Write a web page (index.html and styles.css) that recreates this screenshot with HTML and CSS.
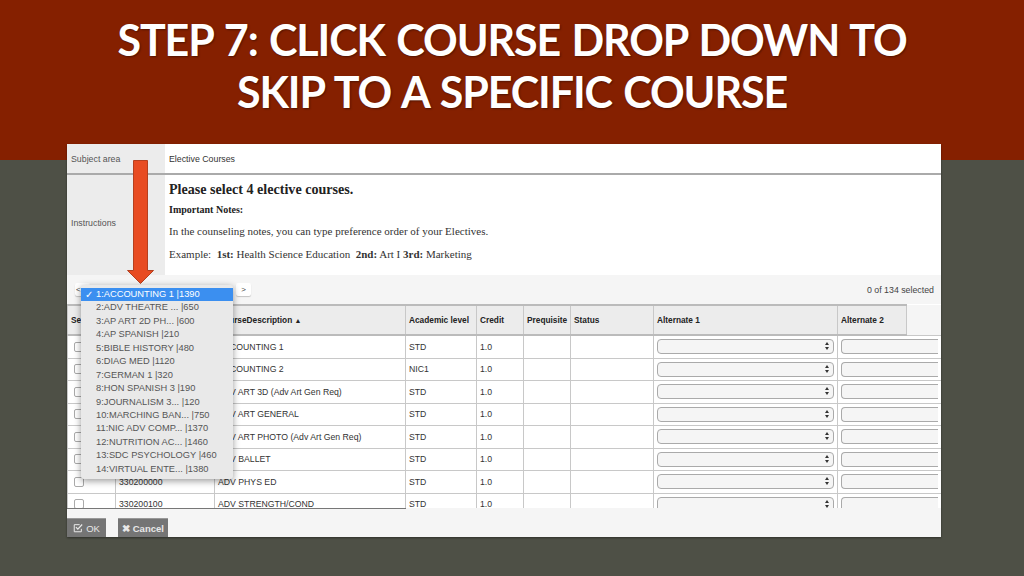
FILE: index.html
```html
<!DOCTYPE html>
<html lang="en">
<head>
    <meta charset="UTF-8">
    <meta name="viewport" content="width=device-width, initial-scale=1.0">
    <title>Step 7</title>
    <link rel="stylesheet" href="styles.css">
</head>
<body>
    <div class="banner">
        <h1>STEP 7: CLICK COURSE DROP DOWN TO<br>SKIP TO A SPECIFIC COURSE</h1>
    </div>

    <div class="window">
        <div class="info-row subject">
            <div class="info-label">Subject area</div>
            <div class="info-value">Elective Courses</div>
        </div>
        <div class="info-row instructions">
            <div class="info-label">Instructions</div>
            <div class="info-value notes">
                <p class="lead">Please select 4 elective courses.</p>
                <p class="small"><b>Important Notes:</b></p>
                <p>In the counseling notes, you can type preference order of your Electives.</p>
                <p>Example:&nbsp; <b>1st:</b> Health Science Education&nbsp; <b>2nd:</b> Art I <b>3rd:</b> Marketing</p>
            </div>
        </div>

        <div class="toolbar">
            <span class="page-btn prev">&lt;</span>
            <span class="page-btn next">&gt;</span>
            <span class="count">0 of 134 selected</span>
        </div>

        <div class="table-wrap">
            <table class="courses">
                <colgroup>
                    <col class="c-sel"><col class="c-code"><col class="c-desc"><col class="c-level"><col class="c-credit"><col class="c-pre"><col class="c-status"><col class="c-alt1"><col class="c-alt2"><col class="c-rest">
                </colgroup>
                <thead>
                    <tr>
                        <th>Select</th><th></th><th>CourseDescription <span class="sort">&#9650;</span></th><th>Academic level</th><th>Credit</th><th>Prequisite</th><th>Status</th><th>Alternate 1</th><th>Alternate 2</th><th class="blank"></th>
                    </tr>
                </thead>
                <tbody>
                    <tr><td><span class="check"></span></td><td></td><td>ACCOUNTING 1</td><td>STD</td><td>1.0</td><td></td><td></td><td><div class="pick"><span class="updown"></span></div></td><td colspan="2"><div class="pick open"></div></td></tr>
                    <tr><td><span class="check"></span></td><td></td><td>ACCOUNTING 2</td><td>NIC1</td><td>1.0</td><td></td><td></td><td><div class="pick"><span class="updown"></span></div></td><td colspan="2"><div class="pick open"></div></td></tr>
                    <tr><td><span class="check"></span></td><td></td><td>ADV ART 3D (Adv Art Gen Req)</td><td>STD</td><td>1.0</td><td></td><td></td><td><div class="pick"><span class="updown"></span></div></td><td colspan="2"><div class="pick open"></div></td></tr>
                    <tr><td><span class="check"></span></td><td></td><td>ADV ART GENERAL</td><td>STD</td><td>1.0</td><td></td><td></td><td><div class="pick"><span class="updown"></span></div></td><td colspan="2"><div class="pick open"></div></td></tr>
                    <tr><td><span class="check"></span></td><td></td><td>ADV ART PHOTO (Adv Art Gen Req)</td><td>STD</td><td>1.0</td><td></td><td></td><td><div class="pick"><span class="updown"></span></div></td><td colspan="2"><div class="pick open"></div></td></tr>
                    <tr><td><span class="check"></span></td><td></td><td>ADV BALLET</td><td>STD</td><td>1.0</td><td></td><td></td><td><div class="pick"><span class="updown"></span></div></td><td colspan="2"><div class="pick open"></div></td></tr>
                    <tr><td><span class="check"></span></td><td>330200000</td><td>ADV PHYS ED</td><td>STD</td><td>1.0</td><td></td><td></td><td><div class="pick"><span class="updown"></span></div></td><td colspan="2"><div class="pick open"></div></td></tr>
                    <tr><td><span class="check"></span></td><td>330200100</td><td>ADV STRENGTH/COND</td><td>STD</td><td>1.0</td><td></td><td></td><td><div class="pick"><span class="updown"></span></div></td><td colspan="2"><div class="pick open"></div></td></tr>
                </tbody>
            </table>
        </div>

        <div class="footer">
            <span class="btn ok">
                <svg viewBox="0 0 12 12" width="10" height="10"><path d="M10 7v3.5H1.5V2H8" fill="none" stroke="currentColor" stroke-width="1.2"/><path d="M3.5 5l2.3 2.3L11 1.8" fill="none" stroke="currentColor" stroke-width="1.5"/></svg>
                OK
            </span>
            <span class="btn cancel">&#10006; Cancel</span>
        </div>

        <!-- arrow and open menu sit over the form -->
        <svg class="arrow" viewBox="0 0 28 125" width="28" height="125">
            <path d="M7.5 .5h14v110h6l-13 13-13-13h6z" fill="#e84c22" stroke="#b5401f"/>
        </svg>
        <ul class="menu">
            <li class="picked">1:ACCOUNTING 1 |1390</li>
            <li>2:ADV THEATRE ... |650</li>
            <li>3:AP ART 2D PH... |600</li>
            <li>4:AP SPANISH |210</li>
            <li>5:BIBLE HISTORY |480</li>
            <li>6:DIAG MED |1120</li>
            <li>7:GERMAN 1 |320</li>
            <li>8:HON SPANISH 3 |190</li>
            <li>9:JOURNALISM 3... |120</li>
            <li>10:MARCHING BAN... |750</li>
            <li>11:NIC ADV COMP... |1370</li>
            <li>12:NUTRITION AC... |1460</li>
            <li>13:SDC PSYCHOLOGY |460</li>
            <li>14:VIRTUAL ENTE... |1380</li>
        </ul>
    </div>
</body>
</html>
```

FILE: styles.css
```css
body { margin: 0; width: 1024px; height: 576px; overflow: hidden; background: #4e5046; font-family: 'Liberation Sans', Arial, sans-serif; color: #333; }

.banner { height: 160px; background: #852000; text-align: center; box-sizing: border-box; padding-top: 14px; }
h1 { margin: 0; font-family: 'Lato', sans-serif; font-size: 43px; letter-spacing: -1.1px; word-spacing: 2px; line-height: 52px; font-weight: 700; color: #fff; text-shadow: 1px 1px 2px rgba(0,0,0,0.4); }

.window { position: relative; width: 874px; height: 393px; margin: -16px 0 0 67px; background: #f5f5f5; display: flex; flex-direction: column; font-size: 8.8px; box-shadow: 0 1px 2px rgba(0,0,0,0.4); }

.info-row { display: flex; border-bottom: 2px solid #aaa; background: #fff; }
.subject { height: 29px; }
.instructions { height: 100px; border-bottom: none; }
.info-label { width: 98px; flex-shrink: 0; background: #ececec; color: #555; display: flex; align-items: center; padding-left: 4px; box-sizing: border-box; }
.instructions .info-label { padding-bottom: 4px; }
.info-value { padding-left: 4px; color: #333; display: flex; align-items: center; }

.notes { display: block; font-family: 'Liberation Serif', serif; font-size: 11px; color: #333; padding-top: 6px; }
.notes p { margin: 0 0 11px; line-height: 12px; }
.notes .lead { font-size: 14.1px; font-weight: bold; color: #222; margin-bottom: 7px; line-height: 16px; }
.notes .small { font-size: 10px; color: #222; margin-bottom: 9px; margin-top: 1px; }

.toolbar { height: 29px; flex-shrink: 0; display: flex; align-items: center; padding-left: 8px; padding-right: 7px; box-sizing: border-box; }
.page-btn { width: 15px; height: 13px; background: #fff; border-radius: 2px; font-size: 8px; color: #444; display: flex; align-items: center; justify-content: center; box-shadow: 0 1px 1px rgba(0,0,0,0.2); }
.prev { margin-right: 146px; justify-content: flex-start; padding-left: 1px; box-sizing: border-box; }
.count { margin-left: auto; color: #444; }

.table-wrap { height: 204px; overflow: hidden; flex-shrink: 0; background: #fff; }
.courses { width: 874px; table-layout: fixed; border-collapse: collapse; }
.c-sel { width: 48px; } .c-code { width: 99px; } .c-desc { width: 191px; } .c-level { width: 71px; } .c-credit { width: 47px; }
.c-pre { width: 47px; } .c-status { width: 83px; } .c-alt1 { width: 184px; } .c-alt2 { width: 69px; } .c-rest { width: 35px; }

.courses th { height: 28px; padding: 0 3px; background: #ececec; border: 1px solid #c8c8c8; border-top: 2px solid #bbb; border-bottom: 2px solid #bbb; text-align: left; font-size: 8.3px; color: #222; white-space: nowrap; }
.courses th.blank { background: #f5f5f5; border: none; }
.sort { font-size: 7px; }
.courses td { height: 21.5px; padding: 0 3px; border: 1px solid #c8c8c8; font-size: 8.7px; color: #333; white-space: nowrap; overflow: hidden; }

.check { display: block; width: 8px; height: 8px; margin-left: 3px; background: #fff; border: 1px solid #aaa; border-radius: 2px; }
.pick { position: relative; height: 13px; background: #f5f5f5; border: 1px solid #aaa; border-radius: 4px; }
.pick.open { border-right: none; border-radius: 4px 0 0 4px; }
.updown { position: absolute; right: 4px; top: 2px; width: 0; height: 0; border-left: 2px solid transparent; border-right: 2px solid transparent; border-bottom: 3px solid #333; }
.updown::after { content: ""; position: absolute; left: -2px; top: 5px; width: 0; height: 0; border-left: 2px solid transparent; border-right: 2px solid transparent; border-top: 3px solid #333; }

.footer { flex: 1; display: flex; align-items: flex-end; gap: 12px; background: linear-gradient(#777, #777) no-repeat 0 0 / 339px 1px; }
.btn { height: 19px; display: flex; align-items: center; justify-content: center; gap: 3px; font-size: 9.5px; box-sizing: border-box; background: #757575; color: #e8e8e8; border-top: 1px solid #999; }
.ok { width: 39px; }
.cancel { width: 50px; font-weight: bold; }

.arrow { position: absolute; left: 59px; top: 16px; }

.menu { position: absolute; left: 14px; top: 141px; width: 152px; margin: 0; padding: 3px 0 3px; list-style: none; background: #e9e9e9; border-radius: 3px; box-shadow: 0 2px 7px rgba(0,0,0,0.4); font-size: 9.3px; color: #555; }
.menu li { height: 13.45px; line-height: 13.45px; padding-left: 15px; white-space: nowrap; }
.menu .picked { background: #3b8ff0; color: #fff; position: relative; }
.menu .picked::before { content: "\2713"; position: absolute; left: 4px; font-family: 'DejaVu Sans', sans-serif; font-size: 10px; font-weight: bold; }
```
